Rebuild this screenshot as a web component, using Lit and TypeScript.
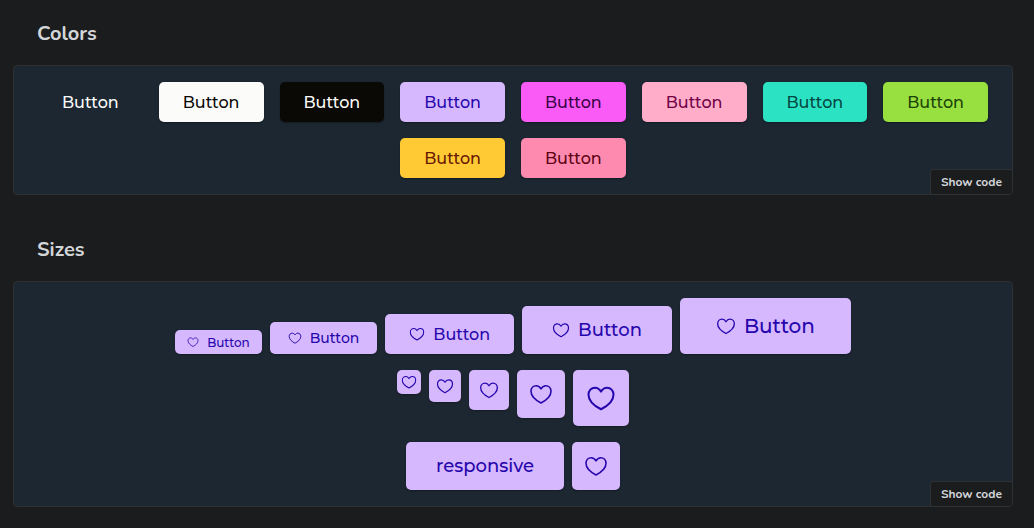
import { LitElement, html, css, svg } from "lit";
import { customElement } from "lit/decorators.js";

const COLORS = [
  "ghost",
  "white",
  "black",
  "primary",
  "secondary",
  "accent",
  "info",
  "success",
  "warning",
  "error",
];

const SIZES = ["xs", "sm", "md", "lg", "xl"];

const heart = svg`<svg viewBox="0 0 24 24" aria-hidden="true">
  <path d="M12 6.9C10.9 4.9 9.2 3.7 7.2 3.7C4.2 3.7 2 6.1 2 9.3C2 14.3 7 18.4 12 21C17 18.4 22 14.3 22 9.3C22 6.1 19.8 3.7 16.8 3.7C14.8 3.7 13.1 4.9 12 6.9Z"
    fill="none" stroke="currentColor" stroke-width="1.6" stroke-linejoin="round" />
</svg>`;

@customElement("app-root")
class AppRoot extends LitElement {
  static styles = css`
    :host {
      display: block;
      min-height: 100vh;
      box-sizing: border-box;
      padding: 20px 21px 21px 13px;
      background: #1b1c1d;
      color: #d3d6d9;
      font-family: Nunito, "Open Sans", sans-serif;
    }
    section + section {
      margin-top: 41px;
    }
    h2 {
      margin: 0 0 17px;
      padding-left: 24px;
      font-size: 20px;
      line-height: 28px;
      font-weight: 700;
    }
    .panel {
      position: relative;
      display: flex;
      flex-direction: column;
      gap: 16px;
      padding: 16px;
      border: 1px solid #2e3031;
      border-radius: 4px;
      background: #1c2732;
    }
    .row {
      display: flex;
      flex-wrap: wrap;
      justify-content: center;
      gap: 8px;
    }
    .palette {
      gap: 16px;
    }
    .bottom {
      align-items: flex-end;
    }
    .top {
      align-items: flex-start;
    }
    button {
      font-family: inherit;
      margin: 0;
      border: 0;
      cursor: pointer;
    }
    .btn {
      display: inline-flex;
      align-items: center;
      justify-content: center;
      gap: 8px;
      border-radius: 5px;
      font-family: Montserrat, Inter, sans-serif;
      font-weight: 500;
      white-space: nowrap;
      box-shadow: 0 1px 2px rgba(0, 0, 0, 0.3);
    }
    .btn svg {
      width: 1em;
      height: 1em;
      flex: none;
    }
    .xs { height: 24px; padding: 0 12px; font-size: 12px; }
    .sm { height: 32px; padding: 0 18px; font-size: 14px; }
    .md { height: 40px; padding: 0 24px; font-size: 16px; }
    .lg { height: 48px; padding: 0 30px; font-size: 18px; }
    .xl { height: 56px; padding: 0 36px; font-size: 20px; }
    .square { padding: 0; }
    .square.xs { width: 24px; font-size: 16px; }
    .square.sm { width: 32px; font-size: 18px; }
    .square.md { width: 40px; font-size: 20px; }
    .square.lg { width: 48px; font-size: 24px; }
    .square.xl { width: 56px; font-size: 30px; }

    .ghost { background: transparent; color: #fbfcfa; box-shadow: none; }
    .white { background: #fbfcfa; color: #0b0906; }
    .black { background: #0b0906; color: #fbfcfa; }
    .primary { background: #d6b8ff; color: #2606ac; }
    .secondary { background: #fa5bf7; color: #370345; }
    .accent { background: #ffadc9; color: #700046; }
    .info { background: #2be2c3; color: #044741; }
    .success { background: #98df40; color: #1b4207; }
    .warning { background: #ffca33; color: #691603; }
    .error { background: #ff8ab0; color: #5c0210; }

    .code {
      position: absolute;
      right: 0;
      bottom: 0;
      height: 25px;
      padding: 0 10px;
      border-top: 1px solid #2e3031;
      border-left: 1px solid #2e3031;
      border-radius: 4px 0 3px 0;
      background: #1b1c1d;
      color: #d3d6d9;
      font-size: 12px;
      font-weight: 700;
    }
  `;

  render() {
    return html`
      <section>
        <h2>Colors</h2>
        <div class="panel">
          <div class="row palette">
            ${COLORS.map((c) => html`<button class="btn md ${c}">Button</button>`)}
          </div>
          <button class="code">Show code</button>
        </div>
      </section>
      <section>
        <h2>Sizes</h2>
        <div class="panel">
          <div class="row bottom">
            ${SIZES.map((s) => html`<button class="btn primary ${s}">${heart}<span>Button</span></button>`)}
          </div>
          <div class="row top">
            ${SIZES.map(
              (s) => html`<button class="btn primary square ${s}" aria-label="Favorite">${heart}</button>`
            )}
          </div>
          <div class="row">
            <button class="btn primary lg">responsive</button>
            <button class="btn primary square lg" aria-label="Favorite">${heart}</button>
          </div>
          <button class="code">Show code</button>
        </div>
      </section>
    `;
  }
}
